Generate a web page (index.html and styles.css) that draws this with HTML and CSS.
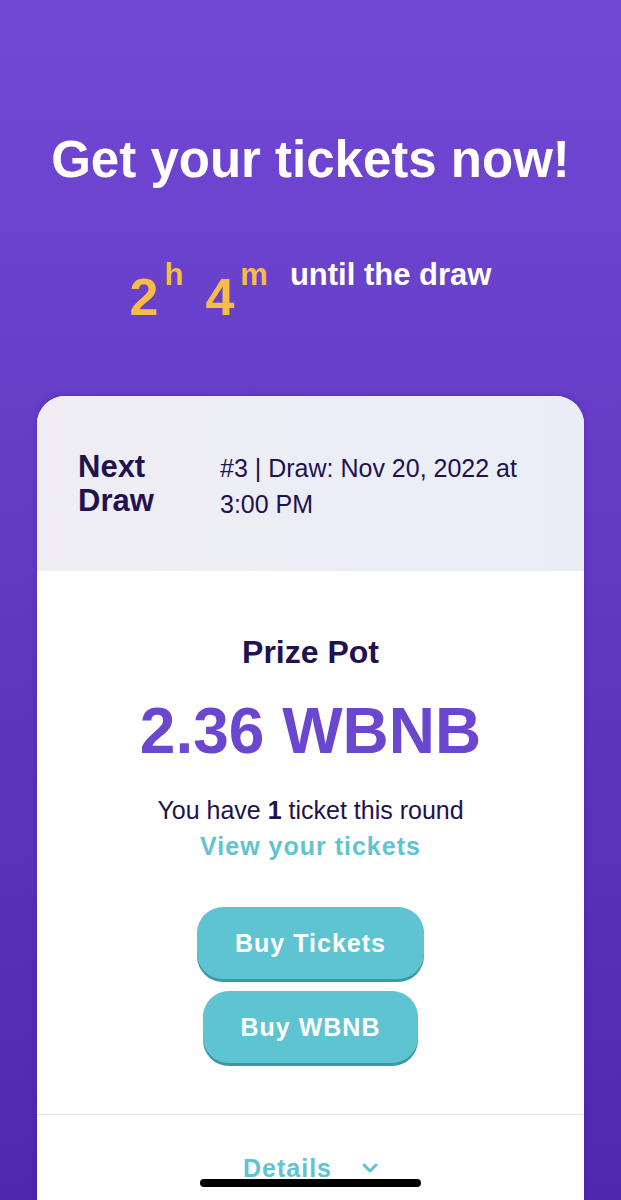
FILE: index.html
```html
<!DOCTYPE html>
<html lang="en">
<head>
    <meta charset="UTF-8">
    <meta name="viewport" content="width=device-width, initial-scale=1.0">
    <title>Lottery</title>
    <link rel="stylesheet" href="styles.css">
</head>
<body>
    <div class="page">
        <h1 class="headline">Get your tickets now!</h1>

        <div class="countdown">
            <span class="num">2</span><span class="unit">h</span>
            <span class="num">4</span><span class="unit">m</span>
            <span class="until">until the draw</span>
        </div>

        <div class="card">
            <div class="card-head">
                <div class="label">Next Draw</div>
                <div class="draw-info">#3 | Draw: Nov 20, 2022 at 3:00 PM</div>
            </div>

            <div class="card-body">
                <h2 class="pot-title">Prize Pot</h2>
                <div class="pot-amount">2.36 WBNB</div>
                <p class="tickets-note">You have <b>1</b> ticket this round</p>
                <a class="link" href="#">View your tickets</a>
                <div class="actions">
                    <button class="btn">Buy Tickets</button>
                    <button class="btn">Buy WBNB</button>
                </div>
            </div>

            <div class="card-foot">
                <a class="link details" href="#">Details
                    <svg width="16" height="10" viewBox="0 0 16 10" fill="none">
                        <path d="M2 2l6 6 6-6" stroke="#5fc4d1" stroke-width="3" stroke-linecap="round" stroke-linejoin="round"/>
                    </svg>
                </a>
            </div>
        </div>
    </div>
    <div class="home-bar"></div>
</body>
</html>
```

FILE: styles.css
```css
body {
    margin: 0;
    font-family: "Liberation Sans", Arial, sans-serif;
    background: linear-gradient(#7149d4, #5027b0) fixed;
    min-height: 100vh;
}
.page {
    padding-top: 130px;
    text-align: center;
}
.headline {
    margin: 0;
    color: #fff;
    font-size: 51px;
    line-height: 60px;
    font-weight: bold;
}
.countdown {
    display: flex;
    justify-content: center;
    align-items: flex-start;
    margin-top: 67px;
    font-weight: bold;
}
.num {
    color: #f5bd45;
    font-size: 52px;
    line-height: 52px;
    margin-top: 14px;
    margin-right: 6px;
}
.unit {
    color: #f5bd45;
    font-size: 31px;
    line-height: 36px;
    margin-right: 22px;
}
.until {
    color: #fff;
    font-size: 31px;
    line-height: 36px;
}
.card {
    margin: 73px 37px 0;
    background-color: #fff;
    border-radius: 28px 28px 0 0;
    overflow: hidden;
    box-shadow: 0 0 6px rgba(40, 10, 110, 0.25); /* soft edge on the purple */
}
.card-head {
    display: grid;
    grid-template-columns: 142px 1fr;
    padding: 54px 41px 49px;
    text-align: left;
    color: #22114f;
    background: linear-gradient(90deg, #f0edf4, #e9eef5);
}
.label {
    font-size: 31px;
    line-height: 34px;
    font-weight: bold;
}
.draw-info {
    font-size: 25px;
    line-height: 36px;
}
.card-body {
    padding: 62px 20px 51px;
    border-bottom: 1px solid #e4e4ea;
}
.pot-title {
    margin: 0;
    color: #22114f;
    font-size: 32px;
    line-height: 38px;
}
.pot-amount {
    margin-top: 22px;
    color: #6b46cf;
    font-size: 64px;
    line-height: 76px;
    font-weight: bold;
}
.tickets-note {
    margin: 23px 0 0;
    color: #22114f;
    font-size: 25px;
    line-height: 36px;
}
.link {
    display: inline-block;
    color: #5fc4d1;
    font-size: 25px;
    line-height: 36px;
    font-weight: bold;
    letter-spacing: 1px;
    text-decoration: none;
}
.actions {
    display: flex;
    flex-direction: column;
    align-items: center;
    gap: 12px;
    margin-top: 43px;
}
.btn {
    height: 72px;
    padding: 0 38px;
    border: none;
    border-radius: 26px;
    background-color: #5fc4d1;
    box-shadow: 0 3px 0 #3b98a5;
    color: #fff;
    font-family: inherit;
    font-size: 25px;
    font-weight: bold;
    letter-spacing: 1px;
    cursor: pointer;
}
.card-foot {
    padding: 35px 0 40px;
}
.details svg {
    margin-left: 22px;
    vertical-align: 4px;
}
.home-bar {
    position: fixed;
    left: 200px;
    bottom: 13px;
    width: 221px;
    height: 8px;
    border-radius: 4px;
    background-color: #000;
}
```
